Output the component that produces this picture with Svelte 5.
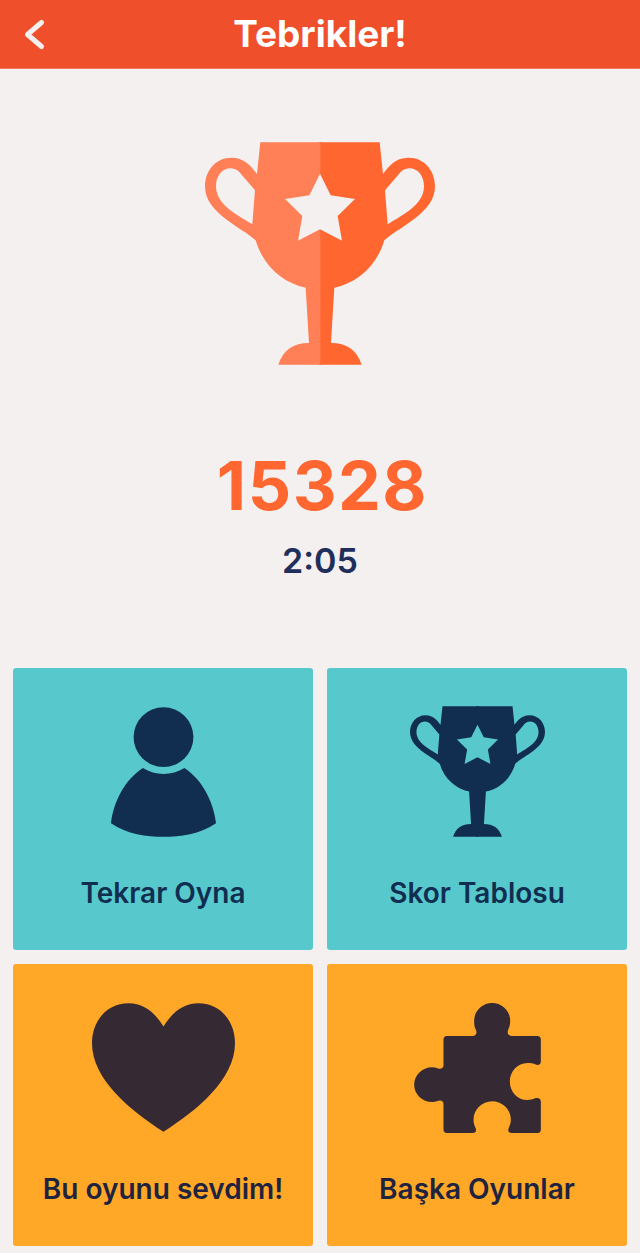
<script>
  const cards = [
    { label: 'Tekrar Oyna', tone: 'teal', icon: 'person' },
    { label: 'Skor Tablosu', tone: 'teal', icon: 'trophy' },
    { label: 'Bu oyunu sevdim!', tone: 'amber', icon: 'heart' },
    { label: 'Başka Oyunlar', tone: 'amber', icon: 'puzzle' }
  ];

  // left half only, the right half is the same path mirrored on x=390
  const cup =
    'M391 38L211 38L201 133C185 112 165 84 125 84C75 84 45 125 45 170C45 250 150 290 197 332C220 410 280 460 347 474L357 640C310 640 280 660 265 705L391 705Z' +
    'M195 182L155 135C145 122 135 116 122 116C95 116 78 140 78 170C78 225 140 255 187 284Z';
  const star = '390,132 422,197 495,208 443,259 456,333 390,299 324,333 337,259 285,208 358,197';
</script>

{#snippet trophy(cls, left, right, starFill)}
  <svg class={cls} viewBox="45 38 690 667" aria-hidden="true">
    <path d={cup} fill={right} fill-rule="evenodd" transform="matrix(-1 0 0 1 780 0)" />
    <rect x="384" y="38" width="12" height="667" fill={right} />
    <path d={cup} fill={left} fill-rule="evenodd" />
    <polygon points={star} fill={starFill} />
  </svg>
{/snippet}

<div class="screen">
  <header class="bar">
    <button class="back" aria-label="Geri">
      <svg viewBox="0 0 32 36" width="32" height="36" aria-hidden="true">
        <path d="M25.500 6.500L11.500 18.500L25.500 30.500" fill="none" stroke="#f3f0ef" stroke-width="5" stroke-linecap="round" stroke-linejoin="round" />
      </svg>
    </button>
    <h1>Tebrikler!</h1>
  </header>

  <section class="result">
    {@render trophy('cup-large', '#ff7f57', '#ff6630', '#f3f0ef')}
    <div class="score">15328</div>
    <div class="time">2:05</div>
  </section>

  <nav class="grid">
    {#each cards as card}
      <button class="card {card.tone}">
        <span class="icon">
          {#if card.icon === 'person'}
            <svg viewBox="332 138 316 390" width="105" height="130" aria-hidden="true">
              <circle cx="490" cy="228" r="90" fill="#112e51" />
              <path fill="#112e51" d="M428 321C465 345 515 345 553 321C605 355 640 420 648 487C600 520 540 528 490 528C440 528 380 520 332 487C340 420 375 355 428 321Z" />
            </svg>
          {:else if card.icon === 'trophy'}
            {@render trophy('cup-small', '#112e51', '#112e51', '#57c9cc')}
          {:else if card.icon === 'heart'}
            <svg viewBox="275 142 430 386" width="143" height="129" aria-hidden="true">
              <path fill="#352a33" d="M490 212C515 170 550 142 595 142C660 142 705 195 705 262C705 370 590 465 490 528C390 465 275 370 275 262C275 195 320 142 385 142C430 142 465 170 490 212Z" />
            </svg>
          {:else}
            <svg viewBox="280 142 380 390" width="127" height="130" aria-hidden="true">
              <path fill="#352a33" d="M378 241L455 241C465 241 470 232 465 222C460 212 460 205 460 195C460 165 485 142 514 142C543 142 568 165 568 195C568 205 566 214 562 222C558 232 563 241 573 241L650 241C656 241 660 245 660 251L660 318C660 327 650 330 643 326C635 322 628 322 620 322C590 322 567 348 567 378C567 408 590 433 620 433C628 433 635 432 643 428C650 425 660 428 660 437L660 522C660 528 656 532 650 532L573 532C563 532 560 524 564 516C568 508 570 500 570 492C570 462 545 437 514 437C483 437 458 462 458 492C458 500 460 508 464 516C468 524 465 532 455 532L378 532C372 532 368 528 368 522L368 445C368 436 360 432 350 436C345 438 340 439 334 439C304 439 280 415 280 387C280 359 304 335 334 335C340 335 345 336 350 338C360 342 368 338 368 329L368 251C368 245 372 241 378 241Z" />
            </svg>
          {/if}
        </span>
        <span class="label">{card.label}</span>
      </button>
    {/each}
  </nav>
</div>

<style>
  :global(body) {
    background: #f3f0ef;
  }

  .screen {
    display: flex;
    flex-direction: column;
    width: 640px;
    height: 1253px;
    overflow: hidden;
    background: #f3f0ef;
    font-family: Inter, "Noto Sans", sans-serif;
  }

  .bar {
    display: flex;
    align-items: center;
    justify-content: center;
    position: relative;
    height: 68px;
    flex: none;
    background: #ef502b;
    border-bottom: 1px solid #f57a5c;
    box-sizing: content-box;
  }

  .bar h1 {
    margin: 0;
    color: #fff;
    font-size: 37px;
    font-weight: 700;
    line-height: 68px;
  }

  .back {
    position: absolute;
    left: 16px;
    top: 16px;
    padding: 0;
    border: 0;
    background: none;
    line-height: 0;
  }

  .result {
    display: flex;
    flex-direction: column;
    align-items: center;
    flex: none;
    height: 599px;
    box-sizing: border-box;
    padding-top: 73px;
  }

  .cup-large {
    width: 230px;
    height: 223px;
  }

  .cup-small {
    width: 135px;
    height: 131px;
  }

  .score {
    margin-top: 75px;
    padding-left: 5px;
    color: #ff6630;
    font-size: 68px;
    font-weight: 700;
    letter-spacing: 1.500px;
    line-height: 90px;
  }

  .time {
    margin-top: 6px;
    color: #1f2f5c;
    font-size: 34px;
    font-weight: 600;
    line-height: 50px;
  }

  .grid {
    display: grid;
    grid-template-columns: 300px 300px;
    grid-auto-rows: 282px;
    gap: 14px;
    justify-content: center;
  }

  .card {
    display: flex;
    flex-direction: column;
    align-items: center;
    padding: 38px 0 0;
    border: 0;
    border-radius: 3px;
    font: inherit;
  }

  .card.teal {
    background: #57c9cc;
    color: #112e51;
  }

  .card.amber {
    background: #ffa726;
    color: #1e2340;
  }

  .icon {
    display: flex;
    align-items: center;
    justify-content: center;
    height: 131px;
    line-height: 0;
  }

  .label {
    margin-top: 36px;
    font-size: 28px;
    font-weight: 600;
    line-height: 40px;
  }
</style>
